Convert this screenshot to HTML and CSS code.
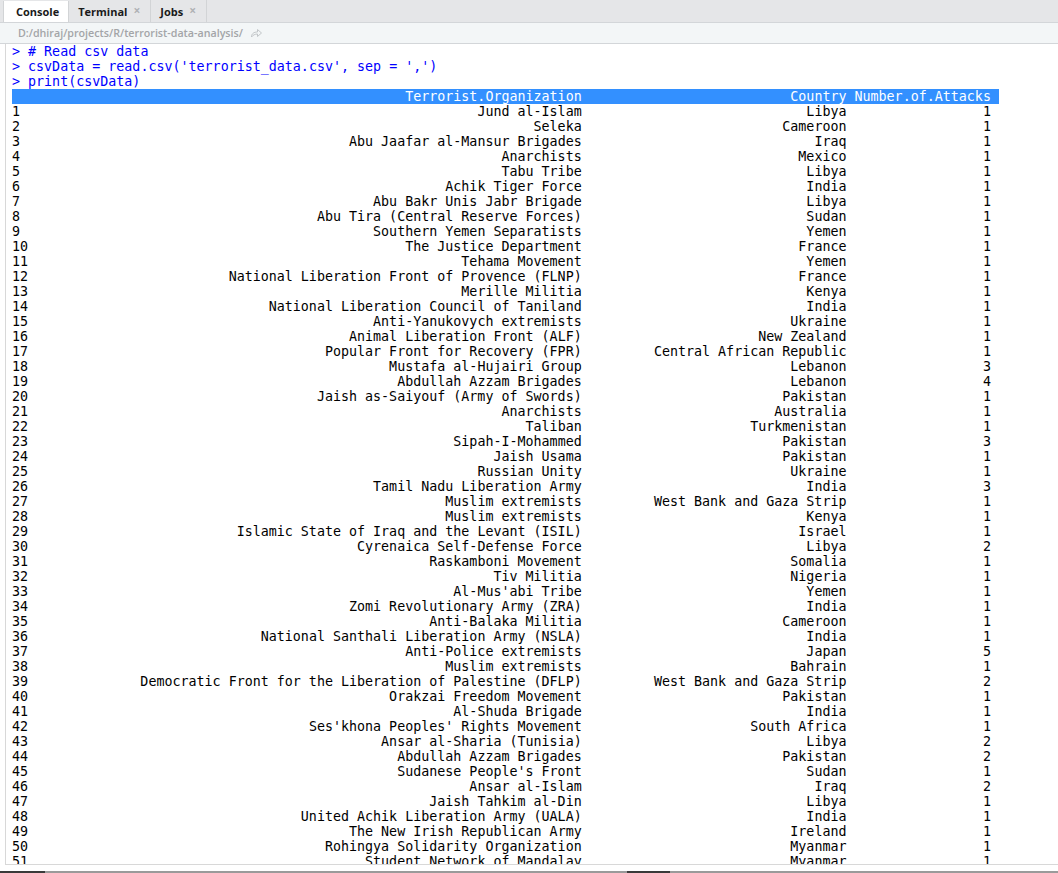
FILE: index.html
```html
<!DOCTYPE html>
<html>
<head>
<meta charset="utf-8">
<link rel="stylesheet" href="styles.css">
</head>
<body>
<div class="pane">
  <div class="tabbar">
    <div class="tab active"><span class="tab-label">Console</span></div>
    <div class="tab"><span class="tab-label">Terminal</span><span class="tab-close">×</span></div>
    <div class="tab"><span class="tab-label">Jobs</span><span class="tab-close">×</span></div>
  </div>
  <div class="pathbar">
    <span class="path">D:/dhiraj/projects/R/terrorist-data-analysis/</span>
    <svg class="path-icon" width="13" height="10" viewBox="0 0 13 10"><path d="M1.5 9 C1.5 5.5 4 4 7.5 4 L7.5 1.5 L11.5 5 L7.5 8.5 L7.5 6 C5 6 3 7 1.5 9 Z" fill="none" stroke="#c2c6c9" stroke-width="1" stroke-linejoin="round"/></svg>
  </div>
  <div class="console">
    <div class="cmd">&gt; # Read csv data</div>
    <div class="cmd">&gt; csvData = read.csv('terrorist_data.csv', sep = ',')</div>
    <div class="cmd">&gt; print(csvData)</div>
    <div class="row head"><span></span><span>Terrorist.Organization</span><span>Country</span><span>Number.of.Attacks</span></div>
    <div class="row"><span>1</span><span>Jund al-Islam</span><span>Libya</span><span>1</span></div>
    <div class="row"><span>2</span><span>Seleka</span><span>Cameroon</span><span>1</span></div>
    <div class="row"><span>3</span><span>Abu Jaafar al-Mansur Brigades</span><span>Iraq</span><span>1</span></div>
    <div class="row"><span>4</span><span>Anarchists</span><span>Mexico</span><span>1</span></div>
    <div class="row"><span>5</span><span>Tabu Tribe</span><span>Libya</span><span>1</span></div>
    <div class="row"><span>6</span><span>Achik Tiger Force</span><span>India</span><span>1</span></div>
    <div class="row"><span>7</span><span>Abu Bakr Unis Jabr Brigade</span><span>Libya</span><span>1</span></div>
    <div class="row"><span>8</span><span>Abu Tira (Central Reserve Forces)</span><span>Sudan</span><span>1</span></div>
    <div class="row"><span>9</span><span>Southern Yemen Separatists</span><span>Yemen</span><span>1</span></div>
    <div class="row"><span>10</span><span>The Justice Department</span><span>France</span><span>1</span></div>
    <div class="row"><span>11</span><span>Tehama Movement</span><span>Yemen</span><span>1</span></div>
    <div class="row"><span>12</span><span>National Liberation Front of Provence (FLNP)</span><span>France</span><span>1</span></div>
    <div class="row"><span>13</span><span>Merille Militia</span><span>Kenya</span><span>1</span></div>
    <div class="row"><span>14</span><span>National Liberation Council of Taniland</span><span>India</span><span>1</span></div>
    <div class="row"><span>15</span><span>Anti-Yanukovych extremists</span><span>Ukraine</span><span>1</span></div>
    <div class="row"><span>16</span><span>Animal Liberation Front (ALF)</span><span>New Zealand</span><span>1</span></div>
    <div class="row"><span>17</span><span>Popular Front for Recovery (FPR)</span><span>Central African Republic</span><span>1</span></div>
    <div class="row"><span>18</span><span>Mustafa al-Hujairi Group</span><span>Lebanon</span><span>3</span></div>
    <div class="row"><span>19</span><span>Abdullah Azzam Brigades</span><span>Lebanon</span><span>4</span></div>
    <div class="row"><span>20</span><span>Jaish as-Saiyouf (Army of Swords)</span><span>Pakistan</span><span>1</span></div>
    <div class="row"><span>21</span><span>Anarchists</span><span>Australia</span><span>1</span></div>
    <div class="row"><span>22</span><span>Taliban</span><span>Turkmenistan</span><span>1</span></div>
    <div class="row"><span>23</span><span>Sipah-I-Mohammed</span><span>Pakistan</span><span>3</span></div>
    <div class="row"><span>24</span><span>Jaish Usama</span><span>Pakistan</span><span>1</span></div>
    <div class="row"><span>25</span><span>Russian Unity</span><span>Ukraine</span><span>1</span></div>
    <div class="row"><span>26</span><span>Tamil Nadu Liberation Army</span><span>India</span><span>3</span></div>
    <div class="row"><span>27</span><span>Muslim extremists</span><span>West Bank and Gaza Strip</span><span>1</span></div>
    <div class="row"><span>28</span><span>Muslim extremists</span><span>Kenya</span><span>1</span></div>
    <div class="row"><span>29</span><span>Islamic State of Iraq and the Levant (ISIL)</span><span>Israel</span><span>1</span></div>
    <div class="row"><span>30</span><span>Cyrenaica Self-Defense Force</span><span>Libya</span><span>2</span></div>
    <div class="row"><span>31</span><span>Raskamboni Movement</span><span>Somalia</span><span>1</span></div>
    <div class="row"><span>32</span><span>Tiv Militia</span><span>Nigeria</span><span>1</span></div>
    <div class="row"><span>33</span><span>Al-Mus'abi Tribe</span><span>Yemen</span><span>1</span></div>
    <div class="row"><span>34</span><span>Zomi Revolutionary Army (ZRA)</span><span>India</span><span>1</span></div>
    <div class="row"><span>35</span><span>Anti-Balaka Militia</span><span>Cameroon</span><span>1</span></div>
    <div class="row"><span>36</span><span>National Santhali Liberation Army (NSLA)</span><span>India</span><span>1</span></div>
    <div class="row"><span>37</span><span>Anti-Police extremists</span><span>Japan</span><span>5</span></div>
    <div class="row"><span>38</span><span>Muslim extremists</span><span>Bahrain</span><span>1</span></div>
    <div class="row"><span>39</span><span>Democratic Front for the Liberation of Palestine (DFLP)</span><span>West Bank and Gaza Strip</span><span>2</span></div>
    <div class="row"><span>40</span><span>Orakzai Freedom Movement</span><span>Pakistan</span><span>1</span></div>
    <div class="row"><span>41</span><span>Al-Shuda Brigade</span><span>India</span><span>1</span></div>
    <div class="row"><span>42</span><span>Ses'khona Peoples' Rights Movement</span><span>South Africa</span><span>1</span></div>
    <div class="row"><span>43</span><span>Ansar al-Sharia (Tunisia)</span><span>Libya</span><span>2</span></div>
    <div class="row"><span>44</span><span>Abdullah Azzam Brigades</span><span>Pakistan</span><span>2</span></div>
    <div class="row"><span>45</span><span>Sudanese People's Front</span><span>Sudan</span><span>1</span></div>
    <div class="row"><span>46</span><span>Ansar al-Islam</span><span>Iraq</span><span>2</span></div>
    <div class="row"><span>47</span><span>Jaish Tahkim al-Din</span><span>Libya</span><span>1</span></div>
    <div class="row"><span>48</span><span>United Achik Liberation Army (UALA)</span><span>India</span><span>1</span></div>
    <div class="row"><span>49</span><span>The New Irish Republican Army</span><span>Ireland</span><span>1</span></div>
    <div class="row"><span>50</span><span>Rohingya Solidarity Organization</span><span>Myanmar</span><span>1</span></div>
    <div class="row"><span>51</span><span>Student Network of Mandalay</span><span>Myanmar</span><span>1</span></div>
  </div>
</div>
<div class="screen-edge"><span class="edge-dark"></span><span class="edge-gray"></span><span class="edge-dark mid"></span><span class="edge-gray fill"></span></div>
</body>
</html>
```

FILE: styles.css
```css
html, body {
  margin: 0;
  padding: 0;
  background: #ffffff;
  width: 1058px;
  height: 873px;
  overflow: hidden;
}

.pane {
  display: flex;
  flex-direction: column;
}

.tabbar {
  height: 22px;
  background: #e5e6e8;
  display: flex;
  padding-left: 3px;
  border-bottom: 1px solid #d3d6d9;
}

.tab {
  display: flex;
  align-items: center;
  padding: 0 10px 0 9px;
  border-right: 1px solid #d2d4d6;
  font-family: "Open Sans", "Noto Sans", sans-serif;
  font-weight: 700;
  font-size: 11px;
  color: #1a1a1a;
  gap: 6px;
}

.tab.active {
  background: #ffffff;
  padding: 0 9px 0 12px;
  border-left: 1px solid #d2d4d6;
  margin-top: 1px;
}

.tab-close {
  color: #b0b2b5;
  font-size: 12px;
  font-weight: 700;
  line-height: 1;
}

.pathbar {
  height: 20px;
  background: #f3f6f7;
  border-bottom: 1px solid #d3d6d9;
  display: flex;
  align-items: center;
  padding-left: 18px;
  gap: 7px;
}

.path {
  font-family: "Open Sans", "Noto Sans", sans-serif;
  font-weight: 600;
  font-size: 10.7px;
  color: #a3a5a8;
}

.path-icon {
  display: block;
}

.console {
  margin-left: 5px;
  height: 820px;
  border-left: 1px solid #d8d8d8;
  border-bottom: 1px solid #d8d8d8;
  padding-left: 6px;
  overflow: hidden;
  font-family: "DejaVu Sans Mono", "Liberation Mono", monospace;
  font-size: 13.333px;
  line-height: 15px;
  color: #000000;
}

.cmd {
  color: #0000ff;
  height: 15px;
  white-space: pre;
}

.row {
  display: grid;
  grid-template-columns: 2ch 68ch 32ch 17ch;
  column-gap: 1ch;
  height: 15px;
  width: fit-content;
  white-space: pre;
}

.row span {
  text-align: right;
}

.row span:first-child {
  text-align: left;
}

.row.head {
  background: #3390ff;
  color: #ffffff;
  padding-right: 1ch;
}

.screen-edge {
  margin-top: 6px;
  height: 2px;
  display: flex;
}

.edge-dark {
  width: 45px;
  background: #3a3a3a;
}

.edge-dark.mid {
  width: 43px;
}

.edge-gray {
  width: 582px;
  background: #9a9a9a;
}

.edge-gray.fill {
  flex: 1;
}
```
